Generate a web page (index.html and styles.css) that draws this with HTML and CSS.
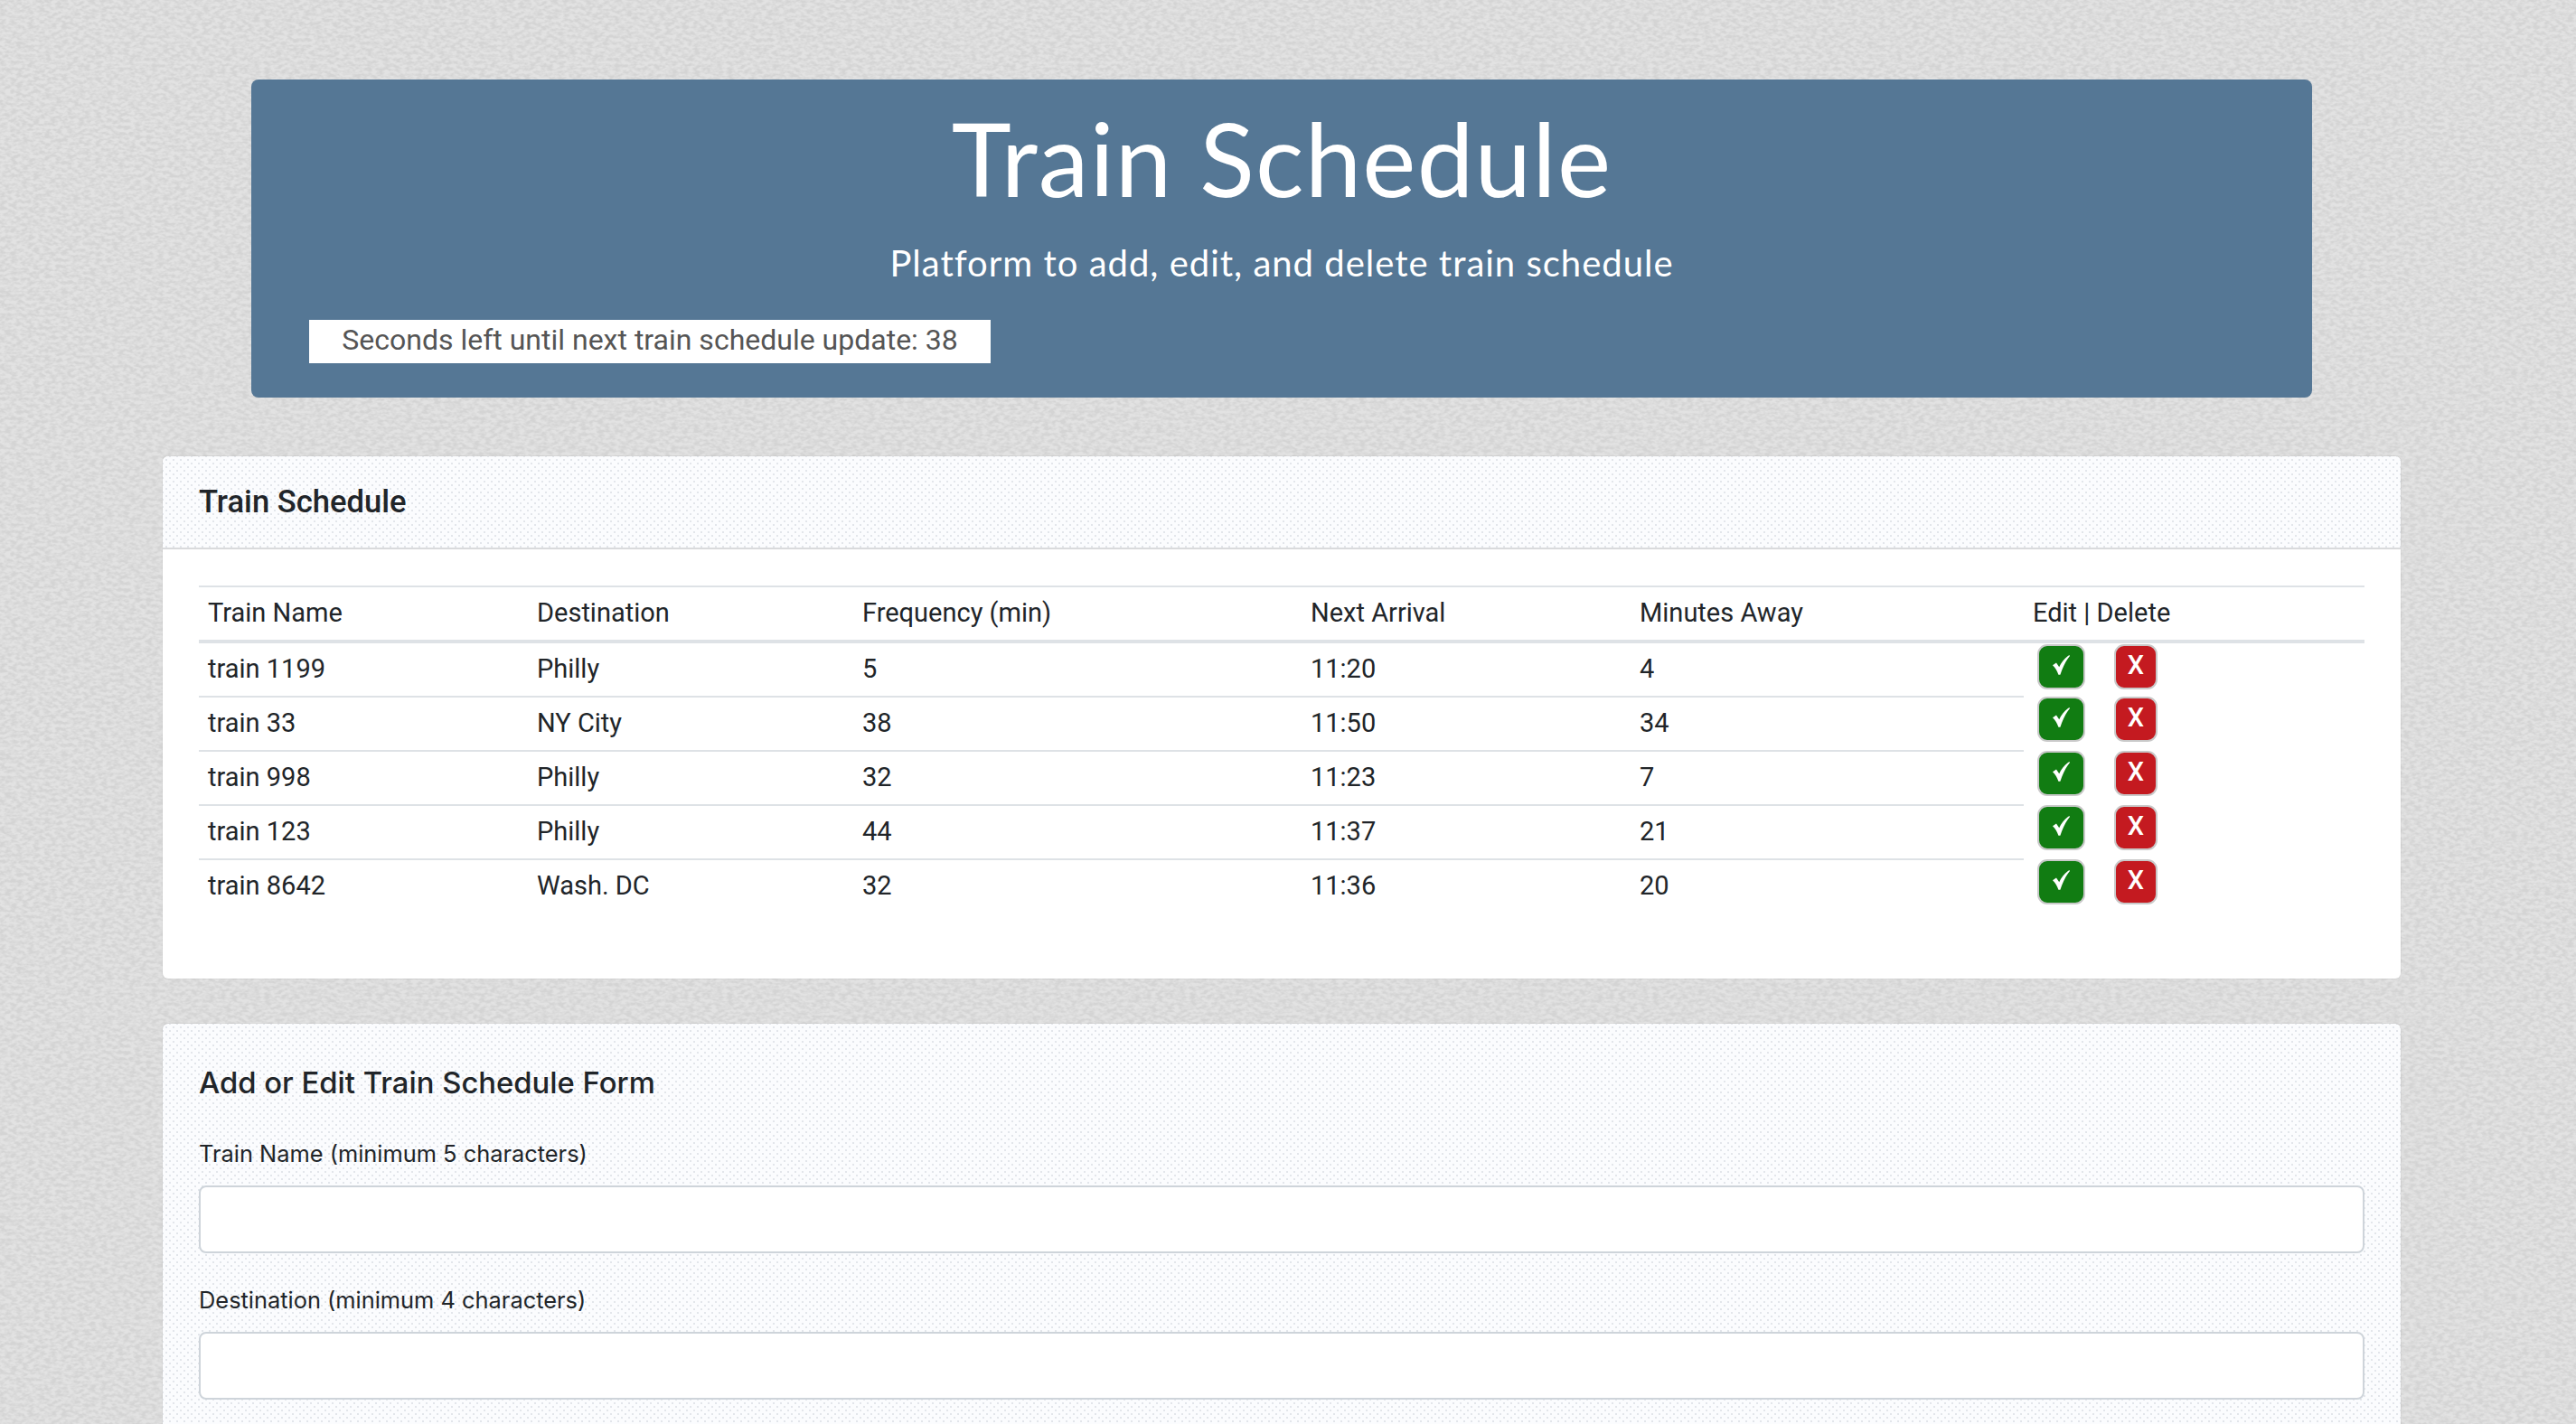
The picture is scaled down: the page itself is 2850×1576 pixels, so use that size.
FILE: index.html
```html
<!DOCTYPE html>
<html lang="en">
<head>
<meta charset="utf-8">
<title>Train Schedule</title>
<link rel="stylesheet" href="styles.css">
</head>
<body>
<svg class="defs" aria-hidden="true"><symbol id="check" viewBox="0 0 19 22"><path d="M0 11.2 4 8.6 7.2 13.2C9.6 8 13.6 3 18.4 0L19 .9C14.6 6 11 13.6 8.4 21.8L6.4 21.8C5 17.4 3 14 0 11.2Z"/></symbol></svg>
<main class="page">
  <header class="hero">
    <h1 class="hero-title">Train Schedule</h1>
    <p class="hero-lead">Platform to add, edit, and delete train schedule</p>
    <div class="countdown">Seconds left until next train schedule update: 38</div>
  </header>

  <section class="card card-schedule">
    <h2 class="card-header">Train Schedule</h2>
    <div class="card-body">
      <table class="schedule">
        <colgroup>
          <col class="c-name"><col class="c-dest"><col class="c-freq"><col class="c-next"><col class="c-away"><col class="c-act">
        </colgroup>
        <thead>
          <tr><th>Train Name</th><th>Destination</th><th>Frequency (min)</th><th>Next Arrival</th><th>Minutes Away</th><th>Edit | Delete</th></tr>
        </thead>
        <tbody>
          <tr><td>train 1199</td><td>Philly</td><td>5</td><td>11:20</td><td>4</td><td class="actions"><div class="btns"><button class="btn btn-edit"><svg class="check"><use href="#check"/></svg></button><button class="btn btn-del">X</button></div></td></tr>
          <tr><td>train 33</td><td>NY City</td><td>38</td><td>11:50</td><td>34</td><td class="actions"><div class="btns"><button class="btn btn-edit"><svg class="check"><use href="#check"/></svg></button><button class="btn btn-del">X</button></div></td></tr>
          <tr><td>train 998</td><td>Philly</td><td>32</td><td>11:23</td><td>7</td><td class="actions"><div class="btns"><button class="btn btn-edit"><svg class="check"><use href="#check"/></svg></button><button class="btn btn-del">X</button></div></td></tr>
          <tr><td>train 123</td><td>Philly</td><td>44</td><td>11:37</td><td>21</td><td class="actions"><div class="btns"><button class="btn btn-edit"><svg class="check"><use href="#check"/></svg></button><button class="btn btn-del">X</button></div></td></tr>
          <tr><td>train 8642</td><td>Wash. DC</td><td>32</td><td>11:36</td><td>20</td><td class="actions"><div class="btns"><button class="btn btn-edit"><svg class="check"><use href="#check"/></svg></button><button class="btn btn-del">X</button></div></td></tr>
        </tbody>
      </table>
    </div>
  </section>

  <section class="card card-form">
    <h2 class="form-title">Add or Edit Train Schedule Form</h2>
    <form class="form">
      <div class="field"><label class="field-label" for="f-name">Train Name (minimum 5 characters)</label><input class="field-input" id="f-name" type="text"></div>
      <div class="field"><label class="field-label" for="f-dest">Destination (minimum 4 characters)</label><input class="field-input" id="f-dest" type="text"></div>
    </form>
  </section>
</main>
</body>
</html>
```

FILE: styles.css
```css
* { box-sizing: border-box; }
html, body { margin: 0; height: 1576px; overflow: hidden; }
.defs { display: none; }
body {
  font-family: Roboto, "Liberation Sans", sans-serif;
  color: #212529;
  background-color: #dadada;
  background-image: url("data:image/svg+xml,%3Csvg xmlns='http://www.w3.org/2000/svg' width='512' height='512'%3E%3Cfilter id='n' x='0' y='0' width='100%25' height='100%25'%3E%3CfeTurbulence type='fractalNoise' baseFrequency='0.16 0.28' numOctaves='2' seed='7' stitchTiles='stitch'/%3E%3CfeColorMatrix values='0 0 0 0 0.5 0 0 0 0 0.5 0 0 0 0 0.5 3 0 0 0 -1.05'/%3E%3C/filter%3E%3Crect width='512' height='512' fill='%23e2e2e2'/%3E%3Crect width='512' height='512' filter='url(%23n)' opacity='.36'/%3E%3C/svg%3E");
}
.page { padding: 88px 194px 0 180px; }

.hero {
  margin: 0 98px 65px 98px;
  height: 352px;
  padding: 20px 64px 0;
  background: #557795;
  border-radius: 8px;
  color: #fff;
}
.hero-title {
  margin: 0;
  text-align: center;
  font-family: Lato, Roboto, sans-serif;
  font-weight: 400;
  font-size: 112px;
  line-height: 134px;
  letter-spacing: 1.2px;
}
.hero-lead {
  margin: 20px 0 0;
  text-align: center;
  font-family: Lato, Roboto, sans-serif;
  font-size: 40px;
  line-height: 58px;
  letter-spacing: 1px;
}
.countdown {
  margin-top: 34px;
  width: 754px;
  height: 48px;
  background: #fff;
  color: #555;
  font-size: 32px;
  line-height: 45px;
  text-align: center;
}

.card {
  border-radius: 6px;
  background: #fff;
  box-shadow: 0 0 0 1px rgba(0,0,0,.04);
}
.card-header, .card-form {
  background-color: #fbfcfe;
  background-image: radial-gradient(#e2e5ea .7px, transparent .9px), radial-gradient(#e2e5ea .7px, transparent .9px);
  background-size: 8px 8px;
  background-position: 0 0, 4px 4px;
}
.card-schedule { height: 578px; margin-bottom: 50px; }
.card-header {
  margin: 0;
  height: 103px;
  padding: 0 40px;
  border-bottom: 2px solid #d9dadc;
  border-radius: 6px 6px 0 0;
  font-size: 34.6px;
  font-weight: 500;
  line-height: 100px;
}
.card-body { padding: 40px 40px 0; }

.schedule {
  width: 100%;
  table-layout: fixed;
  border-collapse: separate;
  border-spacing: 0;
  font-size: 29px;
}
.c-name { width: 364px; }
.c-dest { width: 360px; }
.c-freq { width: 496px; }
.c-next { width: 364px; }
.c-away { width: 435px; }
.schedule th {
  height: 64px;
  padding: 0 10px 3px;
  border-top: 2px solid #dee2e6;
  border-bottom: 4px solid #dee2e6;
  font-weight: 400;
  text-align: left;
}
.schedule td {
  height: 60px;
  padding: 0 10px 2px;
  border-top: 2px solid #dee2e6;
}
.schedule tbody tr:first-child td { height: 58px; border-top: 0; }
.schedule td.actions {
  padding: 1px 0 0 15px;
  border-top: 0;
  vertical-align: top;
}
.btns { display: flex; gap: 32px; }
.btn {
  display: flex;
  align-items: center;
  justify-content: center;
  height: 50px;
  padding: 0 0 4px;
  border: 2px solid #c9c9c9;
  border-radius: 11px;
  color: #fff;
  font-family: Roboto, sans-serif;
  font-size: 29px;
  font-weight: 500;
}
.btn-edit { width: 53px; background: #117c12; }
.btn-del { width: 48px; background: #c41a20; }
.check { width: 19px; height: 22px; fill: #fff; }

.card-form { height: 600px; padding: 44px 40px 0; border-radius: 6px 6px 0 0; }
.form-title {
  margin: 0 0 38px;
  font-family: Inter, Roboto, sans-serif;
  font-size: 32.8px;
  font-weight: 500;
  line-height: 42px;
}
.field { margin-bottom: 32px; }
.field-label {
  display: block;
  margin-bottom: 15px;
  font-family: Inter, Roboto, sans-serif;
  font-size: 25.4px;
  line-height: 40px;
}
.field-input {
  display: block;
  width: 100%;
  height: 75px;
  background: #fff;
  border: 2px solid #ced4da;
  border-radius: 8px;
}
```
